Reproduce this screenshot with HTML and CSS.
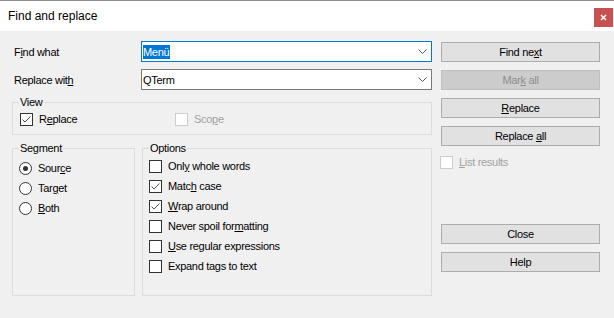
FILE: index.html
```html
<!DOCTYPE html>
<html lang="en">
<head>
    <meta charset="UTF-8">
    <title>Find and replace</title>
    <link rel="stylesheet" href="styles.css">
</head>
<body>
    <div class="window">
        <div class="titlebar">
            <span class="title">Find and replace</span>
            <span class="close-btn">
                <svg width="7" height="7" viewBox="0 0 7 7"><path d="M1 1 L6 6 M6 1 L1 6" stroke="#fff" stroke-width="1.6"/></svg>
            </span>
        </div>
        <div class="content">
            <div class="main">
                <div class="field">
                    <label class="field-label">F<u>i</u>nd what</label>
                    <div class="combo focused">
                        <span class="combo-text"><span class="selection">Menü</span></span>
                        <svg class="chevron" width="9" height="5" viewBox="0 0 9 5"><polyline points="0.5,0.5 4.5,4.5 8.5,0.5" fill="none" stroke="#555" stroke-width="1"/></svg>
                    </div>
                </div>
                <div class="field">
                    <label class="field-label">Replace wit<u>h</u></label>
                    <div class="combo">
                        <span class="combo-text">QTerm</span>
                        <svg class="chevron" width="9" height="5" viewBox="0 0 9 5"><polyline points="0.5,0.5 4.5,4.5 8.5,0.5" fill="none" stroke="#555" stroke-width="1"/></svg>
                    </div>
                </div>

                <fieldset class="group group-view">
                    <legend>View</legend>
                    <div class="view-row">
                        <label class="check view-replace"><span class="box"><svg width="11" height="11" viewBox="0 0 11 11"><polyline points="1.5,5.5 4,8 9.5,2.5" fill="none" stroke="#444" stroke-width="1"/></svg></span><span>R<u>e</u>place</span></label>
                        <label class="check disabled"><span class="box"></span><span>Sco<u>p</u>e</span></label>
                    </div>
                </fieldset>

                <div class="groups">
                    <fieldset class="group group-segment">
                        <legend>Segment</legend>
                        <label class="radio"><span class="dot selected"></span><span>Sour<u>c</u>e</span></label>
                        <label class="radio"><span class="dot"></span><span>Tar<u>g</u>et</span></label>
                        <label class="radio"><span class="dot"></span><span><u>B</u>oth</span></label>
                    </fieldset>
                    <fieldset class="group group-options">
                        <legend>Options</legend>
                        <label class="check"><span class="box"></span><span>Onl<u>y</u> whole words</span></label>
                        <label class="check"><span class="box"><svg width="11" height="11" viewBox="0 0 11 11"><polyline points="1.5,5.5 4,8 9.5,2.5" fill="none" stroke="#555" stroke-width="1"/></svg></span><span>Matc<u>h</u> case</span></label>
                        <label class="check"><span class="box"><svg width="11" height="11" viewBox="0 0 11 11"><polyline points="1.5,5.5 4,8 9.5,2.5" fill="none" stroke="#555" stroke-width="1"/></svg></span><span><u>W</u>rap around</span></label>
                        <label class="check"><span class="box"></span><span>Never spoil for<u>m</u>atting</span></label>
                        <label class="check"><span class="box"></span><span><u>U</u>se regular expressions</span></label>
                        <label class="check"><span class="box"></span><span>Expand tags to text</span></label>
                    </fieldset>
                </div>
            </div>

            <div class="actions">
                <button class="btn">Find ne<u>x</u>t</button>
                <button class="btn" disabled>Mar<u>k</u> all</button>
                <button class="btn"><u>R</u>eplace</button>
                <button class="btn">Replace <u>a</u>ll</button>
                <label class="check disabled list-results"><span class="box"></span><span><u>L</u>ist results</span></label>
                <button class="btn btn-close">Close</button>
                <button class="btn">Help</button>
            </div>
        </div>
    </div>
</body>
</html>
```
FILE: styles.css
```css
* {
    box-sizing: border-box;
}
body {
    margin: 0;
    font-family: 'Liberation Sans', Arial, sans-serif;
    font-size: 11px;
    letter-spacing: -0.3px;
    color: #000;
    background-color: #f0f0f0;
}
.window {
    width: 614px;
    height: 318px;
    border-top: 1px solid #8e8e8e;
    background-color: #f0f0f0;
    overflow: hidden;
}
.titlebar {
    height: 30px;
    background-color: #fff;
    display: flex;
    justify-content: space-between;
    align-items: flex-start;
    padding: 0 1px 0 8px;
}
.title {
    font-size: 12px;
    letter-spacing: 0;
    line-height: 30px;
}
.close-btn {
    margin-top: 7px;
    width: 19px;
    height: 19px;
    background-color: #c75050;
    display: flex;
    align-items: center;
    justify-content: center;
}
.content {
    display: flex;
    gap: 9px;
    padding: 10px 0 0 12px;
}
.main {
    width: 420px;
}
.field {
    display: flex;
    align-items: center;
    height: 21px;
    margin-bottom: 7px;
}
.field-label {
    width: 129px;
    padding-left: 2px;
}
.combo {
    width: 291px;
    height: 21px;
    background-color: #fff;
    border: 1px solid #7a7a7a;
    display: flex;
    align-items: center;
    justify-content: space-between;
    padding: 0 4px 0 1px;
}
.combo.focused {
    border-color: #0078d7;
}
.combo-text {
    line-height: 14px;
}
.selection {
    display: inline-block;
    background-color: #0078d7;
    color: #fff;
    padding-right: 1px;
}
.chevron {
    display: block;
}
.group {
    margin: 0;
    border: 1px solid #dcdcdc;
    padding: 0 6px;
    min-width: 0;
}
.group legend {
    padding: 0 1px;
    line-height: 13px;
}
.group-view {
    margin-top: -1px;
    padding-bottom: 5px;
}
.view-row {
    display: flex;
    height: 20px;
    align-items: center;
}
.view-replace {
    width: 155px;
    margin-left: 1px;
}
.groups {
    display: flex;
    gap: 7px;
    height: 154px;
    margin-top: 7px;
}
.group-segment {
    width: 123px;
    padding-top: 3px;
}
.group-options {
    width: 290px;
    padding-top: 1px;
}
.check, .radio {
    display: flex;
    align-items: center;
    height: 20px;
}
.box {
    width: 13px;
    height: 13px;
    border: 1px solid #333;
    background-color: #fff;
    margin-right: 6px;
    display: flex;
    align-items: center;
    justify-content: center;
}
.check.disabled {
    color: #a0a0a0;
}
.check.disabled .box {
    border-color: #cccccc;
}
.dot {
    width: 13px;
    height: 13px;
    border: 1px solid #333;
    border-radius: 50%;
    background-color: #fff;
    margin-right: 6px;
    display: flex;
    align-items: center;
    justify-content: center;
}
.dot.selected::after {
    content: '';
    width: 5px;
    height: 5px;
    border-radius: 50%;
    background-color: #333;
}
.actions {
    width: 159px;
    display: flex;
    flex-direction: column;
    padding-top: 1px;
}
.btn {
    height: 20px;
    margin: 0 0 8px;
    padding: 0;
    font-family: inherit;
    font-size: 11px;
    letter-spacing: -0.3px;
    color: #000;
    background-color: #e1e1e1;
    border: 1px solid #adadad;
}
.btn:disabled {
    background-color: #cccccc;
    border-color: #bfbfbf;
    color: #8d8d8d;
}
.list-results {
    margin: -2px 0 0 -1px;
}
.btn-close {
    margin-top: 52px;
}
```
